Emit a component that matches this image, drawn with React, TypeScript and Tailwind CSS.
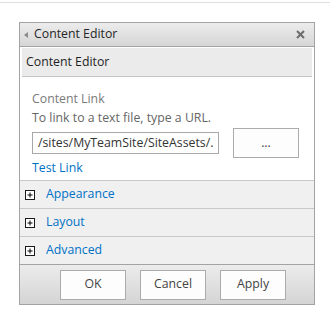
import { Fragment } from "react";

const sections = ["Appearance", "Layout", "Advanced"];

function PlusBox() {
  return (
    <svg width="10" height="10" viewBox="0 0 10 10" className="shrink-0">
      <rect x="0.5" y="0.5" width="9" height="9" fill="#fff" stroke="#1a1a1a" />
      <path d="M2.5 5h5M5 2.5v5" stroke="#000" strokeWidth="1" />
    </svg>
  );
}

export default function App() {
  return (
    <div className="w-[330px] h-[321px] bg-white font-['Open_Sans',sans-serif] text-[12.3px]">
      {/* top rule */}
      <div className="pt-[2px]">
        <div className="h-px bg-[#dedede]" />
      </div>

      <div className="ml-[19px] mt-[19px] w-[296px] border border-[#a3a3a3] flex flex-col">
        {/* Title bar */}
        <div className="h-[24px] flex items-center bg-gradient-to-b from-[#ececec] to-[#d6d6d6] border-b border-[#a3a3a3] pl-[4px] pr-[9px]">
          <svg width="4" height="6" viewBox="0 0 4 6" className="mr-[6px]">
            <path d="M4 0L0 3l4 3z" fill="#8a8a8a" />
          </svg>
          <span className="text-[#262626] leading-none">Content Editor</span>
          <svg width="9" height="9" viewBox="0 0 9 9" className="ml-auto">
            <path d="M1 1l7 7M8 1L1 8" stroke="#6b6b6b" strokeWidth="2" />
          </svg>
        </div>

        {/* Section header */}
        <div className="px-[2px] pt-[1px]">
          <div className="h-[29px] flex items-center bg-[#ebebeb] border-b border-[#c4c4c4] pl-[4px] text-[#1f1f1f]">
            Content Editor
          </div>
        </div>

        {/* Body */}
        <div className="px-[12px] pt-[13px] pb-[2px] flex flex-col">
          <div className="text-[#7a7a7a] leading-[18px]">Content Link</div>
          <div className="text-[#666] leading-[20px]">To link to a text file, type a URL.</div>
          <div className="flex items-center">
            <div className="w-[187px] h-[22px] border border-[#a8a8a8] flex items-center pl-[5px] overflow-hidden whitespace-nowrap text-[#333]">
              /sites/MyTeamSite/SiteAssets/.
            </div>
            <button className="ml-[14px] w-[66px] h-[30px] border border-[#ababab] bg-[#fdfdfd] text-[#444] flex items-center justify-center leading-none">
              ...
            </button>
          </div>
          <div className="text-[#0072c6] leading-[20px]">Test Link</div>
        </div>

        {/* Collapsible sections */}
        {sections.map((s) => (
          <Fragment key={s}>
            <div className="h-[28px] flex items-center bg-[#f0f0f0] border-t border-[#c8c8c8] pl-[5px]">
              <PlusBox />
              <span className="ml-[11px] text-[#0072c6]">{s}</span>
            </div>
          </Fragment>
        ))}

        {/* Footer */}
        <div className="h-[40px] border-t border-[#a3a3a3] bg-gradient-to-b from-[#ececec] to-[#d4d4d4] flex items-center pl-[40px] gap-[14px]">
          {["OK", "Cancel", "Apply"].map((b) => (
            <button
              key={b}
              className="w-[66px] h-[30px] border border-[#ababab] bg-[#fdfdfd] text-[#444] flex items-center justify-center"
            >
              {b}
            </button>
          ))}
        </div>
      </div>
    </div>
  );
}
